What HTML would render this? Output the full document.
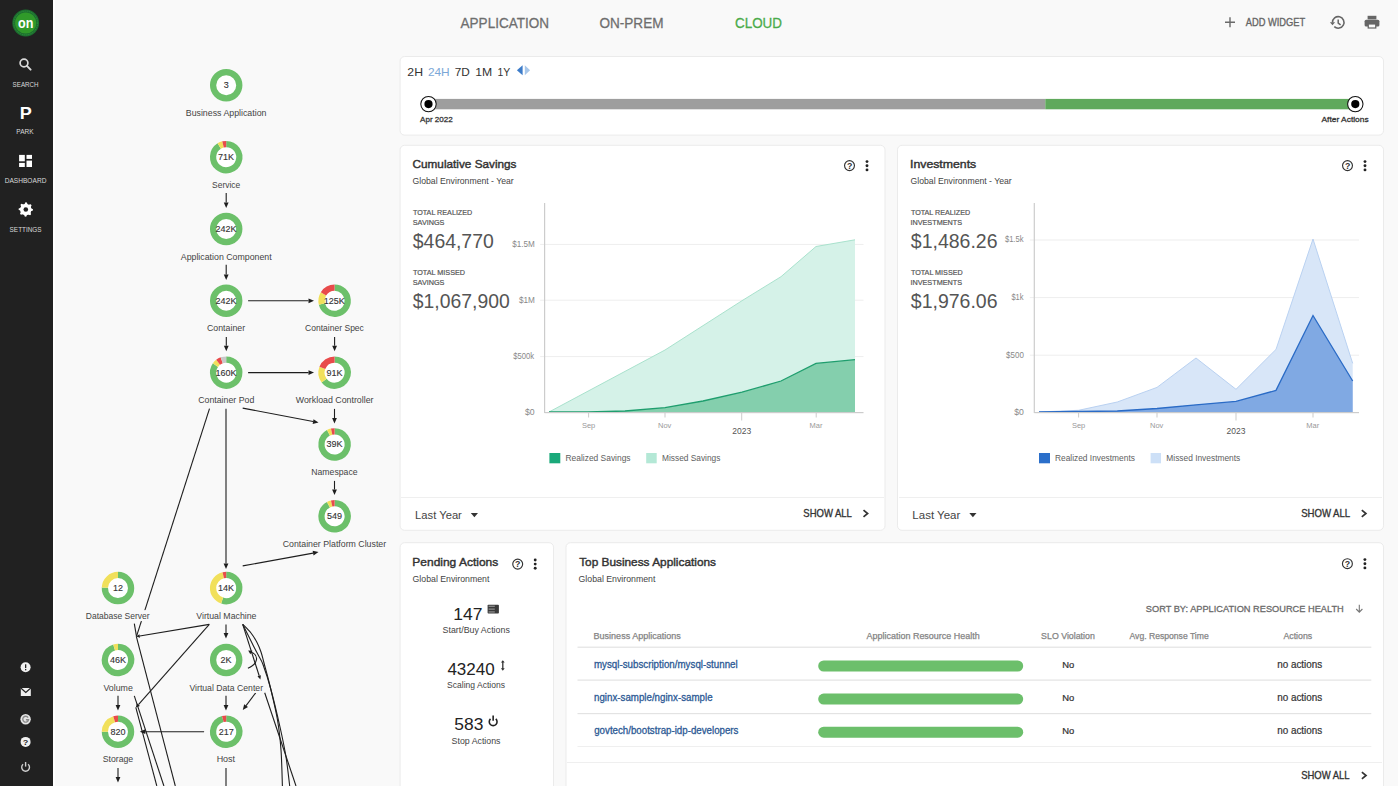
<!DOCTYPE html>
<html><head><meta charset="utf-8"><style>
html,body{margin:0;padding:0;background:#f9f9f9;overflow:hidden;}
svg{display:block;}
text{font-family:"Liberation Sans", sans-serif;}
</style></head><body>
<svg width="1398" height="786" viewBox="0 0 1398 786" font-family='"Liberation Sans", sans-serif'>
<rect x="0" y="0" width="1398" height="786" rx="0" fill="#f9f9f9"/>
<rect x="0" y="0" width="53" height="786" rx="0" fill="#212121"/>
<rect x="53" y="0" width="2" height="786" fill="#ffffff"/>
<circle cx="25.7" cy="23" r="13.4" fill="#1c6e2e"/>
<circle cx="25.7" cy="23" r="11.9" fill="none" stroke="#2f8f40" stroke-width="1" stroke-dasharray="1.2,0.9"/>
<circle cx="25.7" cy="23" r="10.6" fill="#309a2a"/>
<text x="18.10" y="27.50" font-size="14" font-weight="bold" textLength="15.38" lengthAdjust="spacingAndGlyphs" fill="#ffffff">on</text>
<circle cx="24" cy="63" r="3.9" fill="none" stroke="#d9d9d9" stroke-width="1.7"/>
<line x1="26.9" y1="65.9" x2="30.6" y2="69.6" stroke="#d9d9d9" stroke-width="2" stroke-linecap="round"/>
<text x="12.62" y="86.60" font-size="7" textLength="25.89" lengthAdjust="spacingAndGlyphs" fill="#d9d9d9">SEARCH</text>
<text x="19.78" y="118.70" font-size="16.5" font-weight="bold" textLength="12.04" lengthAdjust="spacingAndGlyphs" fill="#ffffff">P</text>
<text x="16.36" y="134.40" font-size="7" textLength="17.31" lengthAdjust="spacingAndGlyphs" fill="#d9d9d9">PARK</text>
<rect x="19.1" y="154.9" width="5.699999999999999" height="6.400000000000006" rx="0" fill="#ffffff"/>
<rect x="26.5" y="154.9" width="5.5" height="4.0" rx="0" fill="#ffffff"/>
<rect x="19.1" y="162.9" width="5.699999999999999" height="4.099999999999994" rx="0" fill="#ffffff"/>
<rect x="26.5" y="160.6" width="5.5" height="6.400000000000006" rx="0" fill="#ffffff"/>
<text x="4.66" y="182.90" font-size="7" textLength="41.75" lengthAdjust="spacingAndGlyphs" fill="#d9d9d9">DASHBOARD</text>
<path d="M25.45,202.31 L26.86,202.38 L27.62,204.42 L28.58,204.87 L30.64,204.17 L31.58,205.21 L30.68,207.19 L31.04,208.19 L32.99,209.15 L32.92,210.56 L30.88,211.32 L30.43,212.28 L31.13,214.34 L30.09,215.28 L28.11,214.38 L27.11,214.74 L26.15,216.69 L24.74,216.62 L23.98,214.58 L23.02,214.13 L20.96,214.83 L20.02,213.79 L20.92,211.81 L20.56,210.81 L18.61,209.85 L18.68,208.44 L20.72,207.68 L21.17,206.72 L20.47,204.66 L21.51,203.72 L23.49,204.62 L24.49,204.26Z" fill="#ffffff"/>
<circle cx="25.8" cy="209.5" r="5.62" fill="#ffffff"/>
<circle cx="25.8" cy="209.5" r="2.3" fill="#222222"/>
<text x="9.61" y="231.80" font-size="7" textLength="31.98" lengthAdjust="spacingAndGlyphs" fill="#d9d9d9">SETTINGS</text>
<circle cx="25.6" cy="667.3" r="5" fill="#f0f0f0"/>
<rect x="25" y="664.3" width="1.3" height="3.8" fill="#222"/><rect x="25" y="669" width="1.3" height="1.3" fill="#222"/>
<rect x="20.8" y="688" width="10" height="8" fill="#f0f0f0"/>
<path d="M20.8,688 L25.8,692.5 L30.8,688" fill="none" stroke="#222" stroke-width="1.2"/>
<circle cx="25.6" cy="719.3" r="5.2" fill="#e6e6e6"/>
<path d="M28.1,717.6 A2.9,2.9 0 1 0 28.5,719.8 L25.9,719.8" fill="none" stroke="#8a8a8a" stroke-width="1.4"/>
<circle cx="25.6" cy="741.9" r="5" fill="#f0f0f0"/>
<text x="22.89" y="745.30" font-size="8" font-weight="bold" textLength="5.54" lengthAdjust="spacingAndGlyphs" fill="#222">?</text>
<path d="M23.1,764.3 A3.9,3.9 0 1 0 28.1,764.3" fill="none" stroke="#cfcfcf" stroke-width="1.4"/>
<line x1="25.6" y1="762" x2="25.6" y2="766.6" stroke="#cfcfcf" stroke-width="1.4"/>
<text x="460.60" y="28.20" font-size="14.5" textLength="88.37" lengthAdjust="spacingAndGlyphs" fill="#6e6e6e" stroke="#6e6e6e" stroke-width="0.28">APPLICATION</text>
<text x="599.49" y="28.20" font-size="14.5" textLength="64.00" lengthAdjust="spacingAndGlyphs" fill="#6e6e6e" stroke="#6e6e6e" stroke-width="0.28">ON-PREM</text>
<text x="734.96" y="28.00" font-size="14.5" textLength="47.06" lengthAdjust="spacingAndGlyphs" fill="#4aab4a" stroke="#4aab4a" stroke-width="0.28">CLOUD</text>
<path d="M1230,17.3 V27.3 M1225,22.3 H1235" stroke="#6a6a6a" stroke-width="1.4"/>
<text x="1245.73" y="26.00" font-size="10.8" textLength="59.54" lengthAdjust="spacingAndGlyphs" fill="#666666" stroke="#666666" stroke-width="0.35">ADD WIDGET</text>
<path d="M1332.5,22.6 A5.75,5.75 0 1 1 1334.3,26.6" fill="none" stroke="#666" stroke-width="1.55"/>
<path d="M1329.9,22.2 L1335.1,22.2 L1332.5,25.2 Z" fill="#666"/>
<path d="M1338.2,19.5 V23.1 L1340.6,24.9" fill="none" stroke="#666" stroke-width="1.5"/>
<rect x="1367.6" y="15.8" width="8.8" height="3.6" fill="#666"/>
<rect x="1364.6" y="19.8" width="14.8" height="6.8" rx="1.5" fill="#666"/>
<rect x="1367.6" y="23.4" width="8.8" height="5.2" fill="#666"/>
<rect x="1368.9" y="24.6" width="6.2" height="2.8" fill="#f9f9f9"/>
<rect x="400.1" y="56.5" width="983.4" height="78.6" rx="4.5" fill="#fff" stroke="#ebebeb" stroke-width="1"/>
<text x="407.39" y="76.30" font-size="11.5" textLength="15.63" lengthAdjust="spacingAndGlyphs" fill="#333333">2H</text>
<text x="427.91" y="76.30" font-size="11.5" textLength="21.77" lengthAdjust="spacingAndGlyphs" fill="#7ba7d7">24H</text>
<text x="454.81" y="76.30" font-size="11.5" textLength="15.06" lengthAdjust="spacingAndGlyphs" fill="#333333">7D</text>
<text x="475.19" y="76.30" font-size="11.5" textLength="16.94" lengthAdjust="spacingAndGlyphs" fill="#333333">1M</text>
<text x="497.51" y="76.30" font-size="11.5" textLength="12.83" lengthAdjust="spacingAndGlyphs" fill="#333333">1Y</text>
<path d="M522.6,65.2 L516.9,70.2 L522.6,75.2 Z" fill="#3d7cc9"/>
<path d="M524.8,65.2 L530.1,70.2 L524.8,75.2 Z" fill="#a8c7ea"/>
<rect x="428.5" y="98.9" width="616.8" height="10.4" rx="0" fill="#9e9e9e"/>
<rect x="1045.3" y="98.9" width="310.0" height="10.4" rx="0" fill="#5fa95c"/>
<circle cx="428.5" cy="104.1" r="7.7" fill="#fff" stroke="#111" stroke-width="1.05"/>
<circle cx="428.5" cy="104.1" r="4.1" fill="#000"/>
<circle cx="1355.3" cy="104.1" r="7.7" fill="#fff" stroke="#111" stroke-width="1.05"/>
<circle cx="1355.3" cy="104.1" r="4.1" fill="#000"/>
<text x="420.12" y="121.90" font-size="8" textLength="32.65" lengthAdjust="spacingAndGlyphs" fill="#333333" stroke="#333333" stroke-width="0.28">Apr 2022</text>
<text x="1321.53" y="121.90" font-size="7.9" textLength="47.11" lengthAdjust="spacingAndGlyphs" fill="#333333" stroke="#333333" stroke-width="0.28">After Actions</text>
<rect x="400.1" y="145.3" width="484.9" height="384.99999999999994" rx="4.5" fill="#fff" stroke="#ebebeb" stroke-width="1"/>
<rect x="401" y="497" width="483" height="1" fill="#efefef"/>
<text x="412.53" y="168.00" font-size="11.4" textLength="103.97" lengthAdjust="spacingAndGlyphs" fill="#333333" stroke="#333333" stroke-width="0.42">Cumulative Savings</text>
<text x="412.57" y="183.80" font-size="9.2" textLength="101.17" lengthAdjust="spacingAndGlyphs" fill="#444444">Global Environment - Year</text>
<circle cx="849.5" cy="165.6" r="4.95" fill="none" stroke="#333" stroke-width="1.15"/>
<text x="846.92" y="168.80" font-size="8.8" font-weight="bold" fill="#333">?</text>
<circle cx="867" cy="161.60" r="1.45" fill="#222"/>
<circle cx="867" cy="165.70" r="1.45" fill="#222"/>
<circle cx="867" cy="169.90" r="1.45" fill="#222"/>
<text x="412.93" y="215.20" font-size="7.6" textLength="59.31" lengthAdjust="spacingAndGlyphs" fill="#555555" stroke="#555555" stroke-width="0.2">TOTAL REALIZED</text>
<text x="412.77" y="225.20" font-size="7.6" textLength="31.65" lengthAdjust="spacingAndGlyphs" fill="#555555" stroke="#555555" stroke-width="0.2">SAVINGS</text>
<text x="412.81" y="248.00" font-size="20" textLength="80.94" lengthAdjust="spacingAndGlyphs" fill="#555555">$464,770</text>
<text x="412.93" y="275.30" font-size="7.6" textLength="52.12" lengthAdjust="spacingAndGlyphs" fill="#555555" stroke="#555555" stroke-width="0.2">TOTAL MISSED</text>
<text x="412.77" y="285.10" font-size="7.6" textLength="31.65" lengthAdjust="spacingAndGlyphs" fill="#555555" stroke="#555555" stroke-width="0.2">SAVINGS</text>
<text x="412.81" y="307.80" font-size="20" textLength="96.92" lengthAdjust="spacingAndGlyphs" fill="#555555">$1,067,900</text>
<rect x="540.1" y="243.89999999999998" width="323.4" height="1" fill="#eeeeee"/>
<rect x="540.1" y="299.7" width="323.4" height="1" fill="#eeeeee"/>
<rect x="540.1" y="356.09999999999997" width="323.4" height="1" fill="#eeeeee"/>
<polygon points="549,412 665,350 742,300.7 781,276.7 816,246.5 855,239.8 855,412.5 549,412.5" fill="#d5f2e8"/>
<polyline points="549,412 665,350 742,300.7 781,276.7 816,246.5 855,239.8" fill="none" stroke="#a9e2cd" stroke-width="1"/>
<polygon points="549,412 588,412 625,411 665,407.7 703,401 742,392.2 781,381 816,363.4 855,359.7 855,412.5 549,412.5" fill="#84cfad"/>
<polyline points="549,412 588,412 625,411 665,407.7 703,401 742,392.2 781,381 816,363.4 855,359.7" fill="none" stroke="#1f9e6e" stroke-width="1.3"/>
<rect x="544.0" y="203" width="1.2" height="210" fill="#cccccc"/>
<rect x="544.6" y="412" width="318.9" height="1.2" fill="#cccccc"/>
<rect x="588.1" y="412.5" width="1" height="5" fill="#cccccc"/>
<text x="581.92" y="428.00" font-size="7.5" fill="#999999">Sep</text>
<rect x="664.5" y="412.5" width="1" height="5" fill="#cccccc"/>
<text x="658.03" y="428.00" font-size="7.5" fill="#999999">Nov</text>
<rect x="741.2" y="412.5" width="1" height="8" fill="#cccccc"/>
<text x="732.22" y="433.50" font-size="8.5" fill="#555555">2023</text>
<rect x="815.7" y="412.5" width="1" height="5" fill="#cccccc"/>
<text x="809.49" y="428.00" font-size="7.5" fill="#999999">Mar</text>
<text x="512.32" y="246.80" font-size="8.2" textLength="22.55" lengthAdjust="spacingAndGlyphs" fill="#888888">$1.5M</text>
<text x="518.92" y="302.60" font-size="8.2" fill="#888888">$1M</text>
<text x="513.32" y="359.00" font-size="8.2" textLength="20.87" lengthAdjust="spacingAndGlyphs" fill="#888888">$500k</text>
<text x="524.91" y="414.90" font-size="8.2" textLength="9.63" lengthAdjust="spacingAndGlyphs" fill="#888888">$0</text>
<rect x="549.4" y="453" width="10.899999999999977" height="10.3" rx="0" fill="#1aa97a"/>
<text x="565.51" y="460.80" font-size="9" textLength="65.08" lengthAdjust="spacingAndGlyphs" fill="#606060">Realized Savings</text>
<rect x="646.2" y="453" width="10.5" height="10.3" rx="0" fill="#b4e8d6"/>
<text x="662.01" y="460.80" font-size="9" textLength="58.38" lengthAdjust="spacingAndGlyphs" fill="#606060">Missed Savings</text>
<text x="415.07" y="518.80" font-size="11.5" textLength="46.80" lengthAdjust="spacingAndGlyphs" fill="#444444">Last Year</text>
<path d="M470.80,513.1 L478.00,513.1 L474.40,517.3 Z" fill="#333"/>
<text x="803.33" y="516.90" font-size="10.1" textLength="48.53" lengthAdjust="spacingAndGlyphs" fill="#333333" stroke="#333333" stroke-width="0.33">SHOW ALL</text>
<path d="M863.50,510.20 L867.60,513.50 L863.50,516.80" fill="none" stroke="#333" stroke-width="1.7"/>
<rect x="897.5" y="145.3" width="486" height="384.99999999999994" rx="4.5" fill="#fff" stroke="#ebebeb" stroke-width="1"/>
<rect x="899" y="497" width="483" height="1" fill="#efefef"/>
<text x="909.99" y="168.00" font-size="11.4" textLength="66.30" lengthAdjust="spacingAndGlyphs" fill="#333333" stroke="#333333" stroke-width="0.42">Investments</text>
<text x="910.57" y="183.80" font-size="9.2" textLength="101.17" lengthAdjust="spacingAndGlyphs" fill="#444444">Global Environment - Year</text>
<circle cx="1347.5" cy="165.6" r="4.95" fill="none" stroke="#333" stroke-width="1.15"/>
<text x="1344.92" y="168.80" font-size="8.8" font-weight="bold" fill="#333">?</text>
<circle cx="1365" cy="161.60" r="1.45" fill="#222"/>
<circle cx="1365" cy="165.70" r="1.45" fill="#222"/>
<circle cx="1365" cy="169.90" r="1.45" fill="#222"/>
<text x="910.93" y="215.20" font-size="7.6" textLength="59.21" lengthAdjust="spacingAndGlyphs" fill="#555555" stroke="#555555" stroke-width="0.2">TOTAL REALIZED</text>
<text x="910.42" y="225.20" font-size="7.6" textLength="51.70" lengthAdjust="spacingAndGlyphs" fill="#555555" stroke="#555555" stroke-width="0.2">INVESTMENTS</text>
<text x="910.81" y="248.00" font-size="20" textLength="86.75" lengthAdjust="spacingAndGlyphs" fill="#555555">$1,486.26</text>
<text x="910.93" y="275.30" font-size="7.6" textLength="51.72" lengthAdjust="spacingAndGlyphs" fill="#555555" stroke="#555555" stroke-width="0.2">TOTAL MISSED</text>
<text x="910.42" y="285.10" font-size="7.6" textLength="51.70" lengthAdjust="spacingAndGlyphs" fill="#555555" stroke="#555555" stroke-width="0.2">INVESTMENTS</text>
<text x="910.81" y="307.80" font-size="20" textLength="86.75" lengthAdjust="spacingAndGlyphs" fill="#555555">$1,976.06</text>
<rect x="1029.8" y="239.5" width="329.20000000000005" height="1" fill="#eeeeee"/>
<rect x="1029.8" y="297.09999999999997" width="329.20000000000005" height="1" fill="#eeeeee"/>
<rect x="1029.8" y="354.7" width="329.20000000000005" height="1" fill="#eeeeee"/>
<polygon points="1039,412 1078.6,410.3 1117.3,402 1157,387.4 1196,358 1236,389.3 1276,349.4 1313,239 1352.7,363.4 1352.7,412.5 1039,412.5" fill="#d8e6f8"/>
<polyline points="1039,412 1078.6,410.3 1117.3,402 1157,387.4 1196,358 1236,389.3 1276,349.4 1313,239 1352.7,363.4" fill="none" stroke="#b9d1f1" stroke-width="1"/>
<polygon points="1039,412 1078.6,411.5 1117.3,411 1157,408.5 1196,404.8 1236,401.4 1276,390.4 1313,315.5 1352.7,381 1352.7,412.5 1039,412.5" fill="#80a9e3"/>
<polyline points="1039,412 1078.6,411.5 1117.3,411 1157,408.5 1196,404.8 1236,401.4 1276,390.4 1313,315.5 1352.7,381" fill="none" stroke="#2a6bc6" stroke-width="1.3"/>
<rect x="1033.7" y="203" width="1.2" height="210" fill="#cccccc"/>
<rect x="1034.3" y="412" width="324.70000000000005" height="1.2" fill="#cccccc"/>
<rect x="1078.1" y="412.5" width="1" height="5" fill="#cccccc"/>
<text x="1071.92" y="428.00" font-size="7.5" fill="#999999">Sep</text>
<rect x="1156.5" y="412.5" width="1" height="5" fill="#cccccc"/>
<text x="1150.03" y="428.00" font-size="7.5" fill="#999999">Nov</text>
<rect x="1235.5" y="412.5" width="1" height="8" fill="#cccccc"/>
<text x="1226.52" y="433.50" font-size="8.5" fill="#555555">2023</text>
<rect x="1312.5" y="412.5" width="1" height="5" fill="#cccccc"/>
<text x="1306.29" y="428.00" font-size="7.5" fill="#999999">Mar</text>
<text x="1004.92" y="242.40" font-size="8.2" textLength="18.57" lengthAdjust="spacingAndGlyphs" fill="#888888">$1.5k</text>
<text x="1011.43" y="300.00" font-size="8.2" textLength="12.07" lengthAdjust="spacingAndGlyphs" fill="#888888">$1k</text>
<text x="1006.12" y="357.60" font-size="8.2" textLength="17.70" lengthAdjust="spacingAndGlyphs" fill="#888888">$500</text>
<text x="1014.21" y="414.90" font-size="8.2" textLength="9.63" lengthAdjust="spacingAndGlyphs" fill="#888888">$0</text>
<rect x="1039" y="453" width="11" height="10.3" rx="0" fill="#2b6fca"/>
<text x="1055.01" y="460.80" font-size="9" textLength="79.88" lengthAdjust="spacingAndGlyphs" fill="#606060">Realized Investments</text>
<rect x="1150.6" y="453" width="10.400000000000091" height="10.3" rx="0" fill="#cde0f7"/>
<text x="1166.31" y="460.80" font-size="9" textLength="73.98" lengthAdjust="spacingAndGlyphs" fill="#606060">Missed Investments</text>
<text x="912.35" y="518.80" font-size="11.5" fill="#444444">Last Year</text>
<path d="M969.30,513.1 L976.50,513.1 L972.90,517.3 Z" fill="#333"/>
<text x="1301.23" y="516.90" font-size="10.1" textLength="48.93" lengthAdjust="spacingAndGlyphs" fill="#333333" stroke="#333333" stroke-width="0.33">SHOW ALL</text>
<path d="M1361.80,510.20 L1365.90,513.50 L1361.80,516.80" fill="none" stroke="#333" stroke-width="1.7"/>
<rect x="400.1" y="542.7" width="153.39999999999998" height="256.79999999999995" rx="4.5" fill="#fff" stroke="#ebebeb" stroke-width="1"/>
<text x="412.33" y="565.90" font-size="11.4" textLength="85.86" lengthAdjust="spacingAndGlyphs" fill="#333333" stroke="#333333" stroke-width="0.42">Pending Actions</text>
<text x="412.56" y="581.60" font-size="9.2" textLength="76.80" lengthAdjust="spacingAndGlyphs" fill="#444444">Global Environment</text>
<circle cx="517.7" cy="564.1" r="4.95" fill="none" stroke="#333" stroke-width="1.15"/>
<text x="515.12" y="567.30" font-size="8.8" font-weight="bold" fill="#333">?</text>
<circle cx="535.2" cy="560.00" r="1.45" fill="#222"/>
<circle cx="535.2" cy="564.10" r="1.45" fill="#222"/>
<circle cx="535.2" cy="568.30" r="1.45" fill="#222"/>
<text x="453.39" y="619.50" font-size="17" textLength="29.21" lengthAdjust="spacingAndGlyphs" fill="#222222">147</text>
<rect x="487.6" y="604.8" width="11.3" height="8.8" rx="0.8" fill="#3a3a3a"/>
<rect x="488.6" y="605.70" width="6.2" height="1.1" fill="#9a9a9a"/>
<rect x="488.6" y="608.55" width="6.2" height="1.1" fill="#9a9a9a"/>
<rect x="488.6" y="611.40" width="6.2" height="1.1" fill="#9a9a9a"/>
<text x="442.60" y="632.80" font-size="9" textLength="67.21" lengthAdjust="spacingAndGlyphs" fill="#444444">Start/Buy Actions</text>
<text x="447.42" y="675.10" font-size="17" fill="#222222">43240</text>
<path d="M502.8,661.5 V669" fill="none" stroke="#333" stroke-width="1.3"/>
<path d="M500.9,662.6 L502.8,660.2 L504.7,662.6 Z M500.9,668.2 L502.8,670.7 L504.7,668.2 Z" fill="#333"/>
<text x="447.12" y="687.60" font-size="9" textLength="57.88" lengthAdjust="spacingAndGlyphs" fill="#444444">Scaling Actions</text>
<text x="454.30" y="730.40" font-size="17" textLength="29.05" lengthAdjust="spacingAndGlyphs" fill="#222222">583</text>
<path d="M490.5,718.9 A3.9,3.9 0 1 0 495.8,718.9" fill="none" stroke="#222" stroke-width="1.6"/>
<line x1="493.15" y1="715.6" x2="493.15" y2="720.8" stroke="#222" stroke-width="1.6"/>
<text x="451.60" y="743.60" font-size="9" textLength="48.90" lengthAdjust="spacingAndGlyphs" fill="#444444">Stop Actions</text>
<rect x="566.0" y="542.7" width="817.5" height="256.79999999999995" rx="4.5" fill="#fff" stroke="#ebebeb" stroke-width="1"/>
<text x="579.15" y="566.20" font-size="11.4" textLength="136.85" lengthAdjust="spacingAndGlyphs" fill="#333333" stroke="#333333" stroke-width="0.42">Top Business Applications</text>
<text x="578.56" y="581.60" font-size="9.2" textLength="76.80" lengthAdjust="spacingAndGlyphs" fill="#444444">Global Environment</text>
<circle cx="1347.4" cy="563.7" r="4.95" fill="none" stroke="#333" stroke-width="1.15"/>
<text x="1344.82" y="566.90" font-size="8.8" font-weight="bold" fill="#333">?</text>
<circle cx="1364.9" cy="559.60" r="1.45" fill="#222"/>
<circle cx="1364.9" cy="563.70" r="1.45" fill="#222"/>
<circle cx="1364.9" cy="567.90" r="1.45" fill="#222"/>
<text x="1145.83" y="611.90" font-size="9.8" textLength="197.89" lengthAdjust="spacingAndGlyphs" fill="#6a6a6a" stroke="#6a6a6a" stroke-width="0.3">SORT BY: APPLICATION RESOURCE HEALTH</text>
<path d="M1359.3,604.8 V612 M1356.2,609 L1359.3,612.2 L1362.4,609" fill="none" stroke="#777" stroke-width="1.1"/>
<text x="593.59" y="638.60" font-size="8.4" textLength="87.19" lengthAdjust="spacingAndGlyphs" fill="#858585" stroke="#858585" stroke-width="0.25">Business Applications</text>
<text x="866.61" y="638.60" font-size="8.4" textLength="113.03" lengthAdjust="spacingAndGlyphs" fill="#858585" stroke="#858585" stroke-width="0.25">Application Resource Health</text>
<text x="1041.13" y="638.60" font-size="8.4" textLength="53.70" lengthAdjust="spacingAndGlyphs" fill="#858585" stroke="#858585" stroke-width="0.25">SLO Violation</text>
<text x="1129.51" y="638.60" font-size="8.4" textLength="79.24" lengthAdjust="spacingAndGlyphs" fill="#858585" stroke="#858585" stroke-width="0.25">Avg. Response Time</text>
<text x="1283.41" y="638.60" font-size="8.4" textLength="28.76" lengthAdjust="spacingAndGlyphs" fill="#858585" stroke="#858585" stroke-width="0.25">Actions</text>
<rect x="577.5" y="646.6" width="793.8" height="1.2" fill="#e3e3e3"/>
<rect x="577.5" y="679.5" width="793.8" height="1.2" fill="#e3e3e3"/>
<rect x="577.5" y="713.0" width="793.8" height="1.2" fill="#e3e3e3"/>
<rect x="577.5" y="746" width="793.8" height="1" fill="#efefef"/>
<rect x="567" y="762" width="815" height="1" fill="#efefef"/>
<text x="593.99" y="667.80" font-size="10" textLength="143.72" lengthAdjust="spacingAndGlyphs" fill="#2d5a95" stroke="#2d5a95" stroke-width="0.3">mysql-subscription/mysql-stunnel</text>
<rect x="818.2" y="660.50" width="205" height="11" rx="5.5" fill="#6cbf6b"/>
<text x="1062.24" y="667.80" font-size="9" textLength="12.03" lengthAdjust="spacingAndGlyphs" fill="#333333" stroke="#333333" stroke-width="0.22">No</text>
<text x="1277.23" y="668.10" font-size="10" textLength="45.00" lengthAdjust="spacingAndGlyphs" fill="#333333" stroke="#333333" stroke-width="0.2">no actions</text>
<text x="593.99" y="700.90" font-size="10" textLength="118.58" lengthAdjust="spacingAndGlyphs" fill="#2d5a95" stroke="#2d5a95" stroke-width="0.3">nginx-sample/nginx-sample</text>
<rect x="818.2" y="693.60" width="205" height="11" rx="5.5" fill="#6cbf6b"/>
<text x="1062.24" y="700.90" font-size="9" textLength="12.03" lengthAdjust="spacingAndGlyphs" fill="#333333" stroke="#333333" stroke-width="0.22">No</text>
<text x="1277.23" y="701.20" font-size="10" textLength="45.00" lengthAdjust="spacingAndGlyphs" fill="#333333" stroke="#333333" stroke-width="0.2">no actions</text>
<text x="594.23" y="734.00" font-size="10" textLength="144.26" lengthAdjust="spacingAndGlyphs" fill="#2d5a95" stroke="#2d5a95" stroke-width="0.3">govtech/bootstrap-idp-developers</text>
<rect x="818.2" y="726.70" width="205" height="11" rx="5.5" fill="#6cbf6b"/>
<text x="1062.24" y="734.00" font-size="9" textLength="12.03" lengthAdjust="spacingAndGlyphs" fill="#333333" stroke="#333333" stroke-width="0.22">No</text>
<text x="1277.23" y="734.30" font-size="10" textLength="45.00" lengthAdjust="spacingAndGlyphs" fill="#333333" stroke="#333333" stroke-width="0.2">no actions</text>
<text x="1301.23" y="779.10" font-size="10.1" textLength="48.33" lengthAdjust="spacingAndGlyphs" fill="#333333" stroke="#333333" stroke-width="0.33">SHOW ALL</text>
<path d="M1361.90,772.20 L1366.00,775.50 L1361.90,778.80" fill="none" stroke="#333" stroke-width="1.7"/>
<line x1="226.2" y1="192.9" x2="226.20" y2="202.50" stroke="#1e1e1e" stroke-width="1.1"/>
<path d="M226.20,208.00 L223.80,202.50 L228.60,202.50 Z" fill="#1e1e1e"/>
<line x1="226.2" y1="264.7" x2="226.20" y2="274.50" stroke="#1e1e1e" stroke-width="1.1"/>
<path d="M226.20,280.00 L223.80,274.50 L228.60,274.50 Z" fill="#1e1e1e"/>
<line x1="226.3" y1="337" x2="226.30" y2="345.70" stroke="#1e1e1e" stroke-width="1.1"/>
<path d="M226.30,351.20 L223.90,345.70 L228.70,345.70 Z" fill="#1e1e1e"/>
<line x1="248.1" y1="300.8" x2="308.50" y2="300.80" stroke="#1e1e1e" stroke-width="1.1"/>
<path d="M314.00,300.80 L308.50,303.20 L308.50,298.40 Z" fill="#1e1e1e"/>
<line x1="334.6" y1="337" x2="334.60" y2="345.70" stroke="#1e1e1e" stroke-width="1.1"/>
<path d="M334.60,351.20 L332.20,345.70 L337.00,345.70 Z" fill="#1e1e1e"/>
<line x1="248.1" y1="372.6" x2="308.50" y2="372.60" stroke="#1e1e1e" stroke-width="1.1"/>
<path d="M314.00,372.60 L308.50,375.00 L308.50,370.20 Z" fill="#1e1e1e"/>
<line x1="242.7" y1="408.1" x2="313.10" y2="421.57" stroke="#1e1e1e" stroke-width="1.1"/>
<path d="M318.50,422.60 L312.65,423.92 L313.55,419.21 Z" fill="#1e1e1e"/>
<line x1="334.5" y1="408.9" x2="334.50" y2="418.00" stroke="#1e1e1e" stroke-width="1.1"/>
<path d="M334.50,423.50 L332.10,418.00 L336.90,418.00 Z" fill="#1e1e1e"/>
<line x1="334.5" y1="480.9" x2="334.50" y2="489.50" stroke="#1e1e1e" stroke-width="1.1"/>
<path d="M334.50,495.00 L332.10,489.50 L336.90,489.50 Z" fill="#1e1e1e"/>
<line x1="226.0" y1="408.7" x2="226.00" y2="563.50" stroke="#1e1e1e" stroke-width="1.1"/>
<path d="M226.00,569.00 L223.60,563.50 L228.40,563.50 Z" fill="#1e1e1e"/>
<line x1="209.5" y1="408.7" x2="136.5" y2="636.3" stroke="#1e1e1e" stroke-width="1.1"/>
<line x1="134.3" y1="623.7" x2="136.5" y2="636.3" stroke="#1e1e1e" stroke-width="1.1"/>
<line x1="242.7" y1="565.9" x2="313.09" y2="553.09" stroke="#1e1e1e" stroke-width="1.1"/>
<path d="M318.50,552.10 L313.52,555.45 L312.66,550.72 Z" fill="#1e1e1e"/>
<line x1="209.3" y1="624.4" x2="139.75" y2="635.93" stroke="#1e1e1e" stroke-width="1.1"/>
<path d="M136.30,636.50 L139.46,634.15 L140.05,637.70 Z" fill="#1e1e1e"/>
<line x1="136.3" y1="636.3" x2="175.3" y2="786" stroke="#1e1e1e" stroke-width="1.1"/>
<line x1="209.3" y1="624.4" x2="138.45" y2="704.60" stroke="#1e1e1e" stroke-width="1.1"/>
<path d="M135.80,707.60 L136.95,703.28 L139.95,705.93 Z" fill="#1e1e1e"/>
<line x1="134.3" y1="695.9" x2="163.9" y2="786" stroke="#1e1e1e" stroke-width="1.1"/>
<line x1="135.8" y1="707.3" x2="156.8" y2="786" stroke="#1e1e1e" stroke-width="1.1"/>
<line x1="204.1" y1="731.7" x2="145.30" y2="731.70" stroke="#1e1e1e" stroke-width="1.1"/>
<path d="M139.80,731.70 L145.30,729.30 L145.30,734.10 Z" fill="#1e1e1e"/>
<line x1="226.0" y1="624.4" x2="226.00" y2="633.10" stroke="#1e1e1e" stroke-width="1.1"/>
<path d="M226.00,638.60 L223.60,633.10 L228.40,633.10 Z" fill="#1e1e1e"/>
<line x1="226.0" y1="695.8" x2="226.00" y2="705.00" stroke="#1e1e1e" stroke-width="1.1"/>
<path d="M226.00,710.50 L223.60,705.00 L228.40,705.00 Z" fill="#1e1e1e"/>
<line x1="118.0" y1="695.8" x2="118.00" y2="705.00" stroke="#1e1e1e" stroke-width="1.1"/>
<path d="M118.00,710.50 L115.60,705.00 L120.40,705.00 Z" fill="#1e1e1e"/>
<line x1="118.0" y1="768" x2="118.00" y2="777.00" stroke="#1e1e1e" stroke-width="1.1"/>
<path d="M118.00,782.50 L115.60,777.00 L120.40,777.00 Z" fill="#1e1e1e"/>
<line x1="226.0" y1="768" x2="226.0" y2="786" stroke="#1e1e1e" stroke-width="1.1"/>
<line x1="255.7" y1="692.8" x2="246.10" y2="705.60" stroke="#1e1e1e" stroke-width="1.1"/>
<path d="M242.80,710.00 L244.18,704.16 L248.02,707.04 Z" fill="#1e1e1e"/>
<line x1="242.7" y1="624.3" x2="259.18" y2="675.79" stroke="#1e1e1e" stroke-width="1.1"/>
<path d="M260.40,679.60 L257.47,676.34 L260.89,675.24 Z" fill="#1e1e1e"/>
<path d="M242.7,624.3 C244.08,625.75 248.62,629.97 251,633 C253.38,636.03 255.33,639.33 257,642.5 C258.67,645.67 259.83,648.58 261,652 C262.17,655.42 262.50,657.33 264,663 C265.50,668.67 267.75,676.50 270,686 C272.25,695.50 275.67,709.33 277.5,720 C279.33,730.67 280.18,739.00 281,750 C281.82,761.00 282.17,780.00 282.4,786" fill="none" stroke="#1e1e1e" stroke-width="1.1"/>
<path d="M242.7,624.3 C243.67,626.25 246.62,632.22 248.5,636 C250.38,639.78 252.25,643.58 254,647 C255.75,650.42 257.50,653.58 259,656.5 C260.50,659.42 261.08,659.25 263,664.5 C264.92,669.75 267.67,677.58 270.5,688 C273.33,698.42 277.42,715.50 280,727 C282.58,738.50 284.38,747.17 286,757 C287.62,766.83 289.08,781.17 289.7,786" fill="none" stroke="#1e1e1e" stroke-width="1.1"/>
<line x1="264.7" y1="692.8" x2="296" y2="786" stroke="#1e1e1e" stroke-width="1.1"/>
<path d="M247.9,668.2 C258,664 260,655 250,651.8" fill="none" stroke="#1e1e1e" stroke-width="1.1"/>
<path d="M248.2,650.6 L252.6,650.8 L250.3,654.3 Z" fill="#1e1e1e"/>
<circle cx="226.2" cy="85.30" r="16.25" fill="#ffffff"/>
<circle cx="226.2" cy="85.3" r="13.12" fill="none" stroke="#6cc06a" stroke-width="6.25"/>
<text x="223.72" y="88.30" font-size="9" fill="#333333" stroke="#333333" stroke-width="0.12">3</text>
<rect x="185.50" y="107.30" width="81.40" height="11" fill="#f9f9f9"/>
<text x="185.77" y="115.90" font-size="9" textLength="80.68" lengthAdjust="spacingAndGlyphs" fill="#444444">Business Application</text>
<circle cx="226.2" cy="157.13" r="16.25" fill="#ffffff"/>
<path d="M226.20,144.00 A13.12,13.12 0 1 1 219.24,146.00" fill="none" stroke="#6cc06a" stroke-width="6.25"/>
<path d="M219.24,146.00 A13.12,13.12 0 0 1 223.02,144.39" fill="none" stroke="#f1e05b" stroke-width="6.25"/>
<path d="M223.02,144.39 A13.12,13.12 0 0 1 226.20,144.00" fill="none" stroke="#e84b4b" stroke-width="6.25"/>
<text x="218.02" y="160.13" font-size="9" fill="#333333" stroke="#333333" stroke-width="0.12">71K</text>
<rect x="211.50" y="179.13" width="29.40" height="11" fill="#f9f9f9"/>
<text x="212.12" y="187.73" font-size="9" textLength="28.16" lengthAdjust="spacingAndGlyphs" fill="#444444">Service</text>
<circle cx="226.2" cy="228.96" r="16.25" fill="#ffffff"/>
<circle cx="226.2" cy="228.95999999999998" r="13.12" fill="none" stroke="#6cc06a" stroke-width="6.25"/>
<text x="215.52" y="231.96" font-size="9" fill="#333333" stroke="#333333" stroke-width="0.12">242K</text>
<rect x="179.80" y="250.96" width="92.80" height="11" fill="#f9f9f9"/>
<text x="180.78" y="259.56" font-size="9" textLength="90.89" lengthAdjust="spacingAndGlyphs" fill="#444444">Application Component</text>
<circle cx="226.2" cy="300.79" r="16.25" fill="#ffffff"/>
<circle cx="226.2" cy="300.79" r="13.12" fill="none" stroke="#6cc06a" stroke-width="6.25"/>
<text x="215.52" y="303.79" font-size="9" fill="#333333" stroke="#333333" stroke-width="0.12">242K</text>
<rect x="206.45" y="322.79" width="39.50" height="11" fill="#f9f9f9"/>
<text x="207.01" y="331.39" font-size="9" textLength="38.08" lengthAdjust="spacingAndGlyphs" fill="#444444">Container</text>
<circle cx="334.6" cy="300.79" r="16.25" fill="#ffffff"/>
<path d="M334.60,287.67 A13.12,13.12 0 1 1 321.86,303.97" fill="none" stroke="#6cc06a" stroke-width="6.25"/>
<path d="M321.86,303.97 A13.12,13.12 0 0 1 323.47,293.83" fill="none" stroke="#f1e05b" stroke-width="6.25"/>
<path d="M323.47,293.83 A13.12,13.12 0 0 1 334.60,287.67" fill="none" stroke="#e84b4b" stroke-width="6.25"/>
<text x="323.81" y="303.79" font-size="9" fill="#333333" stroke="#333333" stroke-width="0.12">125K</text>
<rect x="304.55" y="322.79" width="60.10" height="11" fill="#f9f9f9"/>
<text x="305.12" y="331.39" font-size="9" textLength="58.77" lengthAdjust="spacingAndGlyphs" fill="#444444">Container Spec</text>
<circle cx="226.2" cy="372.62" r="16.25" fill="#ffffff"/>
<path d="M226.20,359.50 A13.12,13.12 0 1 1 215.45,365.09" fill="none" stroke="#6cc06a" stroke-width="6.25"/>
<path d="M215.45,365.09 A13.12,13.12 0 0 1 218.12,362.28" fill="none" stroke="#f1e05b" stroke-width="6.25"/>
<path d="M218.12,362.28 A13.12,13.12 0 0 1 221.71,360.29" fill="none" stroke="#e84b4b" stroke-width="6.25"/>
<path d="M221.71,360.29 A13.12,13.12 0 0 1 226.20,359.50" fill="none" stroke="#c8c8c8" stroke-width="6.25"/>
<text x="215.41" y="375.62" font-size="9" fill="#333333" stroke="#333333" stroke-width="0.12">160K</text>
<rect x="197.65" y="394.62" width="57.10" height="11" fill="#f9f9f9"/>
<text x="198.21" y="403.22" font-size="9" textLength="56.09" lengthAdjust="spacingAndGlyphs" fill="#444444">Container Pod</text>
<circle cx="334.6" cy="372.62" r="16.25" fill="#ffffff"/>
<path d="M334.60,359.50 A13.12,13.12 0 1 1 324.12,380.52" fill="none" stroke="#6cc06a" stroke-width="6.25"/>
<path d="M324.12,380.52 A13.12,13.12 0 0 1 322.35,367.92" fill="none" stroke="#f1e05b" stroke-width="6.25"/>
<path d="M322.35,367.92 A13.12,13.12 0 0 1 334.60,359.50" fill="none" stroke="#e84b4b" stroke-width="6.25"/>
<text x="326.43" y="375.62" font-size="9" fill="#333333" stroke="#333333" stroke-width="0.12">91K</text>
<rect x="294.85" y="394.62" width="79.50" height="11" fill="#f9f9f9"/>
<text x="295.81" y="403.22" font-size="9" textLength="77.69" lengthAdjust="spacingAndGlyphs" fill="#444444">Workload Controller</text>
<circle cx="334.6" cy="444.45" r="16.25" fill="#ffffff"/>
<path d="M334.60,431.32 A13.12,13.12 0 1 1 328.44,432.86" fill="none" stroke="#6cc06a" stroke-width="6.25"/>
<path d="M328.44,432.86 A13.12,13.12 0 0 1 331.65,431.66" fill="none" stroke="#f1e05b" stroke-width="6.25"/>
<path d="M331.65,431.66 A13.12,13.12 0 0 1 334.60,431.32" fill="none" stroke="#e84b4b" stroke-width="6.25"/>
<text x="326.48" y="447.45" font-size="9" fill="#333333" stroke="#333333" stroke-width="0.12">39K</text>
<rect x="311.00" y="466.45" width="47.20" height="11" fill="#f9f9f9"/>
<text x="311.28" y="475.05" font-size="9" textLength="46.29" lengthAdjust="spacingAndGlyphs" fill="#444444">Namespace</text>
<circle cx="334.6" cy="516.28" r="16.25" fill="#ffffff"/>
<path d="M334.60,503.15 A13.12,13.12 0 1 1 328.44,504.69" fill="none" stroke="#6cc06a" stroke-width="6.25"/>
<path d="M328.44,504.69 A13.12,13.12 0 0 1 331.65,503.49" fill="none" stroke="#f1e05b" stroke-width="6.25"/>
<path d="M331.65,503.49 A13.12,13.12 0 0 1 334.60,503.15" fill="none" stroke="#e84b4b" stroke-width="6.25"/>
<text x="327.12" y="519.28" font-size="9" fill="#333333" stroke="#333333" stroke-width="0.12">549</text>
<rect x="282.20" y="538.28" width="104.80" height="11" fill="#f9f9f9"/>
<text x="282.76" y="546.88" font-size="9" textLength="103.37" lengthAdjust="spacingAndGlyphs" fill="#444444">Container Platform Cluster</text>
<circle cx="118.0" cy="588.11" r="16.25" fill="#ffffff"/>
<path d="M118.00,574.99 A13.12,13.12 0 1 1 104.88,587.65" fill="none" stroke="#6cc06a" stroke-width="6.25"/>
<path d="M104.88,587.65 A13.12,13.12 0 0 1 118.00,574.99" fill="none" stroke="#f1e05b" stroke-width="6.25"/>
<text x="112.89" y="591.11" font-size="9" fill="#333333" stroke="#333333" stroke-width="0.12">12</text>
<rect x="85.50" y="610.11" width="65.00" height="11" fill="#f9f9f9"/>
<text x="85.80" y="618.71" font-size="9" textLength="63.84" lengthAdjust="spacingAndGlyphs" fill="#444444">Database Server</text>
<circle cx="226.2" cy="588.11" r="16.25" fill="#ffffff"/>
<path d="M226.20,574.99 A13.12,13.12 0 1 1 222.14,600.59" fill="none" stroke="#6cc06a" stroke-width="6.25"/>
<path d="M222.14,600.59 A13.12,13.12 0 0 1 223.25,575.32" fill="none" stroke="#f1e05b" stroke-width="6.25"/>
<path d="M223.25,575.32 A13.12,13.12 0 0 1 226.20,574.99" fill="none" stroke="#e84b4b" stroke-width="6.25"/>
<text x="217.91" y="591.11" font-size="9" fill="#333333" stroke="#333333" stroke-width="0.12">14K</text>
<rect x="195.30" y="610.11" width="61.80" height="11" fill="#f9f9f9"/>
<text x="196.26" y="618.71" font-size="9" textLength="60.23" lengthAdjust="spacingAndGlyphs" fill="#444444">Virtual Machine</text>
<circle cx="118.0" cy="659.94" r="16.25" fill="#ffffff"/>
<path d="M118.00,646.81 A13.12,13.12 0 1 1 114.16,647.39" fill="none" stroke="#6cc06a" stroke-width="6.25"/>
<path d="M114.16,647.39 A13.12,13.12 0 0 1 118.00,646.81" fill="none" stroke="#f1e05b" stroke-width="6.25"/>
<text x="109.95" y="662.94" font-size="9" fill="#333333" stroke="#333333" stroke-width="0.12">46K</text>
<rect x="102.50" y="681.94" width="31.00" height="11" fill="#f9f9f9"/>
<text x="103.46" y="690.54" font-size="9" textLength="29.42" lengthAdjust="spacingAndGlyphs" fill="#444444">Volume</text>
<circle cx="226.2" cy="659.94" r="16.25" fill="#ffffff"/>
<circle cx="226.2" cy="659.9399999999999" r="13.12" fill="none" stroke="#6cc06a" stroke-width="6.25"/>
<text x="220.53" y="662.94" font-size="9" fill="#333333" stroke="#333333" stroke-width="0.12">2K</text>
<rect x="188.50" y="681.94" width="75.40" height="11" fill="#f9f9f9"/>
<text x="189.46" y="690.54" font-size="9" textLength="73.58" lengthAdjust="spacingAndGlyphs" fill="#444444">Virtual Data Center</text>
<circle cx="118.0" cy="731.77" r="16.25" fill="#ffffff"/>
<path d="M118.00,718.64 A13.12,13.12 0 1 1 104.88,731.77" fill="none" stroke="#6cc06a" stroke-width="6.25"/>
<path d="M104.88,731.77 A13.12,13.12 0 0 1 114.16,719.22" fill="none" stroke="#f1e05b" stroke-width="6.25"/>
<path d="M114.16,719.22 A13.12,13.12 0 0 1 118.00,718.64" fill="none" stroke="#e84b4b" stroke-width="6.25"/>
<text x="110.47" y="734.77" font-size="9" fill="#333333" stroke="#333333" stroke-width="0.12">820</text>
<rect x="102.15" y="753.77" width="31.70" height="11" fill="#f9f9f9"/>
<text x="102.76" y="762.37" font-size="9" textLength="30.46" lengthAdjust="spacingAndGlyphs" fill="#444444">Storage</text>
<circle cx="226.2" cy="731.77" r="16.25" fill="#ffffff"/>
<path d="M226.20,718.64 A13.12,13.12 0 1 1 222.80,719.09" fill="none" stroke="#6cc06a" stroke-width="6.25"/>
<path d="M222.80,719.09 A13.12,13.12 0 0 1 226.20,718.64" fill="none" stroke="#e84b4b" stroke-width="6.25"/>
<text x="218.70" y="734.77" font-size="9" fill="#333333" stroke="#333333" stroke-width="0.12">217</text>
<rect x="216.40" y="753.77" width="19.60" height="11" fill="#f9f9f9"/>
<text x="216.66" y="762.37" font-size="9" textLength="18.42" lengthAdjust="spacingAndGlyphs" fill="#444444">Host</text>
</svg>
</body></html>
